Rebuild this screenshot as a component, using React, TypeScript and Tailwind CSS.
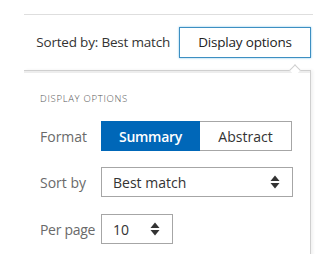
import React from 'react';

function SortArrows() {
  return (
    <svg width="10" height="14" viewBox="0 0 10 14" className="shrink-0">
      <path d="M5 0.5 L9.5 6 L0.5 6 Z" fill="#333" />
      <path d="M5 13.5 L9.5 8 L0.5 8 Z" fill="#333" />
    </svg>
  );
}

export default function App() {
  return (
    <div className="h-[254px] w-[331px] bg-white font-['Open_Sans',sans-serif] text-[#333]">
      <div className="pt-[14px]">
        <div className="ml-6 w-[289px] border-t border-[#dedede]" />
      </div>

      <div className="mt-[12px] flex items-center justify-end pr-[20px]">
        <span className="mr-[9px] text-[13.5px] tracking-[-0.2px] text-[#333]">Sorted by: Best match</span>
        <button className="flex h-[31px] w-[132px] items-center justify-center border border-[#3d8fc2] bg-white text-[13.5px] tracking-[-0.2px] text-[#222] shadow-[0_0_2px_#7fc3ea]">
          Display options
        </button>
      </div>

      <div className="relative ml-6 mt-[12px] w-[287px] border-t border-r border-[#cfcfcf] shadow-[2px_0_3px_rgba(0,0,0,0.06),inset_0_2px_0_#ededed] pb-4 pl-4">
        <div className="absolute right-[11px] top-[-5px] h-[8px] w-[8px] rotate-45 border-l border-t border-[#cfcfcf] bg-white" />

        <div className="pt-[21px] text-[9.5px] font-light uppercase tracking-[0.7px] text-[#555]">Display options</div>

        <div className="mt-[15px] flex items-center">
          <span className="w-[61px] text-[14px] text-[#6a6a6a]">Format</span>
          <div className="flex h-[30px]">
            <div className="flex w-[99px] items-center justify-center bg-[#0067b8] text-[14px] font-semibold tracking-[-0.3px] text-white">
              Summary
            </div>
            <div className="flex w-[92px] items-center justify-center border border-l-0 border-[#a6a6a6] text-[14px] text-[#333]">
              Abstract
            </div>
          </div>
        </div>

        <div className="mt-[16px] flex items-center">
          <span className="w-[61px] text-[14px] text-[#6a6a6a]">Sort by</span>
          <div className="flex h-[30px] w-[192px] items-center justify-between border border-[#a6a6a6] pl-[11px] pr-[12px] text-[14px] text-[#333]">
            <span>Best match</span>
            <SortArrows />
          </div>
        </div>

        <div className="mt-[17px] flex items-center">
          <span className="w-[61px] text-[14px] tracking-[-0.3px] text-[#6a6a6a]">Per page</span>
          <div className="flex h-[30px] w-[72px] items-center justify-between border border-[#a6a6a6] pl-[11px] pr-[12px] text-[14px] text-[#333]">
            <span>10</span>
            <SortArrows />
          </div>
        </div>
      </div>
    </div>
  );
}
